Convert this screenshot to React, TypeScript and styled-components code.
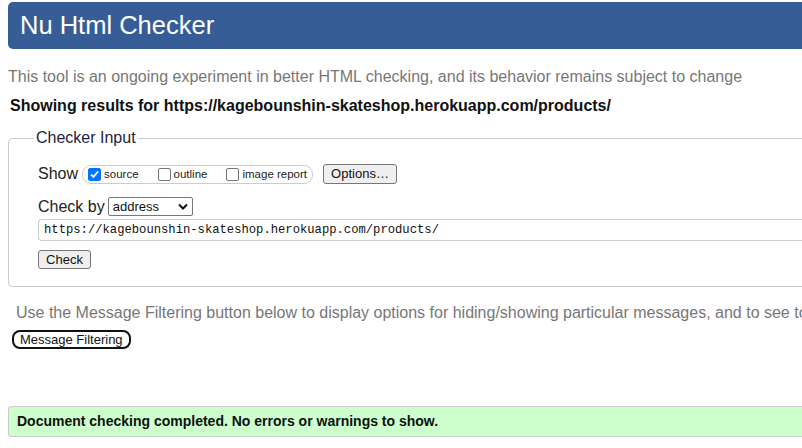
import styled, { createGlobalStyle } from "styled-components";

const GlobalStyle = createGlobalStyle`
  html, body {
    margin: 0;
    padding: 0;
    background: #fff;
    overflow: hidden;
  }
  body {
    font-family: "Liberation Sans", Arial, sans-serif;
    color: #222;
  }
`;

const Page = styled.div`
  width: 1000px;
  padding: 2px 8px 0 8px;
`;

const Header = styled.h1`
  margin: 0;
  height: 47px;
  background: #365d95;
  border-radius: 5px;
  color: #fff;
  font-weight: normal;
  font-size: 25.5px;
  line-height: 47px;
  padding-left: 12px;
`;

const Intro = styled.p`
  margin: 18px 0 0 0;
  font-size: 16px;
  color: #777;
  line-height: 20px;
`;

const Results = styled.p`
  margin: 9px 0 0 2px;
  font-size: 16px;
  font-weight: bold;
  color: #111;
  line-height: 20px;
`;

const Fieldset = styled.fieldset`
  margin: 13px 0 0 0;
  padding: 17px 0 17px 29px;
  border: 1px solid #ccc;
  border-radius: 4px;
`;

const Legend = styled.legend`
  margin-left: -4px;
  padding: 0 2px;
  font-size: 16px;
  color: #1f2340;
`;

const Row = styled.div<{ $gap?: number }>`
  display: flex;
  align-items: center;
  margin-top: ${(p) => p.$gap ?? 0}px;
`;

const Label = styled.span`
  font-size: 16px;
  color: #222;
  margin-right: 4px;
`;

const OptionGroup = styled.div`
  display: flex;
  align-items: center;
  height: 17px;
  padding: 0 5px;
  border: 1px solid #ccc;
  border-radius: 9px;
`;

const Option = styled.label`
  display: flex;
  align-items: center;
  font-size: 11.5px;
  color: #222;
  margin-right: 19px;
  &:last-child {
    margin-right: 0;
  }
`;

const Box = styled.span<{ $checked?: boolean }>`
  width: 13px;
  height: 13px;
  border-radius: 2px;
  margin-right: 3px;
  box-sizing: border-box;
  border: 1px solid ${(p) => (p.$checked ? "#0075ff" : "#767676")};
  background: ${(p) => (p.$checked ? "#0075ff" : "#fff")};
  display: flex;
  align-items: center;
  justify-content: center;
`;

const Button = styled.button`
  font-family: "Liberation Sans", Arial, sans-serif;
  font-size: 13px;
  color: #111;
  background: #efefef;
  border: 1px solid #767676;
  border-radius: 3px;
  padding: 1px 6px;
  height: 20px;
  line-height: 16px;
`;

const OptionsButton = styled(Button)`
  margin-left: 10px;
  width: 74px;
`;

const Select = styled.div`
  display: flex;
  align-items: center;
  justify-content: space-between;
  box-sizing: border-box;
  width: 85px;
  height: 19px;
  margin-left: -1px;
  padding: 0 4px 0 4px;
  border: 1px solid #767676;
  border-radius: 2px;
  font-size: 13px;
  color: #111;
`;

const UrlInput = styled.div`
  box-sizing: border-box;
  height: 22px;
  margin-top: 3px;
  padding-left: 5px;
  border: 1px solid #ccc;
  border-right: none;
  border-radius: 4px 0 0 4px;
  font-family: "Liberation Mono", "DejaVu Sans Mono", monospace;
  font-size: 12.2px;
  line-height: 20px;
  color: #111;
`;

const CheckButton = styled(Button)`
  margin-top: 9px;
  width: 53px;
  height: 19px;
  line-height: 15px;
`;

const Hint = styled.p`
  margin: 16px 0 0 8px;
  font-size: 16px;
  color: #777;
  line-height: 20px;
  white-space: nowrap;
`;

const FilterButton = styled.button`
  display: block;
  margin: 7px 0 0 4px;
  height: 19px;
  padding: 0 6px;
  font-family: "Liberation Sans", Arial, sans-serif;
  font-size: 13px;
  line-height: 15px;
  color: #111;
  background: #fff;
  border: 2px solid #111;
  border-radius: 8px;
`;

const Success = styled.div`
  margin-top: 57px;
  height: 31px;
  box-sizing: border-box;
  padding-left: 8px;
  background: #ccffcc;
  border: 1px solid #ccc;
  border-radius: 3px;
  font-size: 14px;
  font-weight: bold;
  color: #111;
  line-height: 29px;
`;

const Chevron = () => (
  <svg width="10" height="7" viewBox="0 0 10 7">
    <path d="M1 1.5 L5 5.5 L9 1.5" fill="none" stroke="#111" strokeWidth="2" />
  </svg>
);

const Tick = () => (
  <svg width="11" height="11" viewBox="0 0 11 11">
    <path d="M2 5.5 L4.5 8 L9 2.5" fill="none" stroke="#fff" strokeWidth="1.8" />
  </svg>
);

export default function App() {
  return (
    <>
      <GlobalStyle />
      <Page>
        <Header>Nu Html Checker</Header>
        <Intro>
          This tool is an ongoing experiment in better HTML checking, and its
          behavior remains subject to change
        </Intro>
        <Results>
          Showing results for https://kagebounshin-skateshop.herokuapp.com/products/
        </Results>
        <Fieldset>
          <Legend>Checker Input</Legend>
          <Row>
            <Label>Show</Label>
            <OptionGroup>
              <Option>
                <Box $checked>
                  <Tick />
                </Box>
                source
              </Option>
              <Option>
                <Box />
                outline
              </Option>
              <Option>
                <Box />
                image report
              </Option>
            </OptionGroup>
            <OptionsButton>Options…</OptionsButton>
          </Row>
          <Row $gap={13}>
            <Label>Check by</Label>
            <Select>
              address
              <Chevron />
            </Select>
          </Row>
          <UrlInput>https://kagebounshin-skateshop.herokuapp.com/products/</UrlInput>
          <CheckButton>Check</CheckButton>
        </Fieldset>
        <Hint>
          Use the Message Filtering button below to display options for
          hiding/showing particular messages, and to see total counts of
          errors and warnings.
        </Hint>
        <FilterButton>Message Filtering</FilterButton>
        <Success>Document checking completed. No errors or warnings to show.</Success>
      </Page>
    </>
  );
}
